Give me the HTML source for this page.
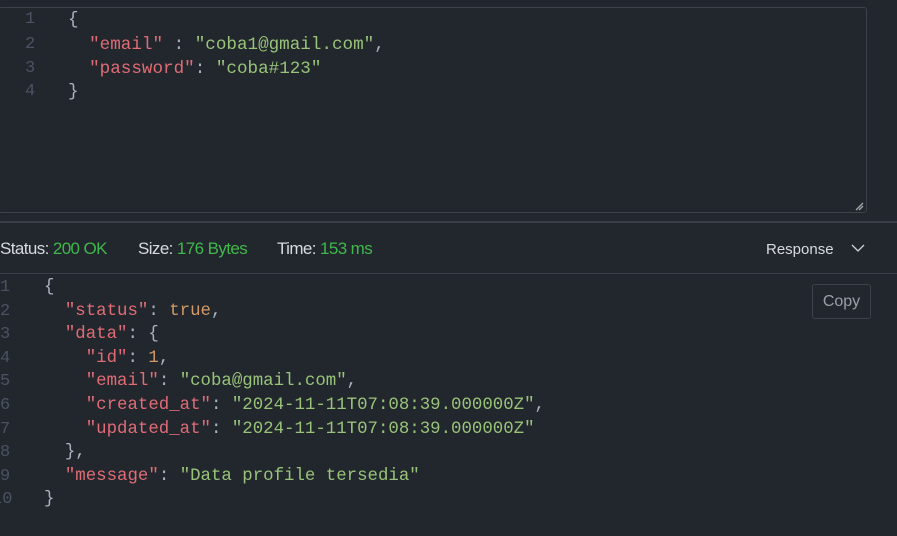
<!DOCTYPE html>
<html><head><style>
body{margin:0;width:897px;height:536px;background:#22262d;overflow:hidden;position:relative;font-family:"Liberation Mono",monospace}
.box{position:absolute;left:-2px;top:7px;width:867px;height:204px;border:1px solid #3c414a;border-radius:3px}
.sep{position:absolute;left:0;top:221px;width:897px;height:2px;background:#3a3f47}
.sep2{position:absolute;left:0;top:273px;width:897px;height:1px;background:#3a3f47}
.l{position:absolute;white-space:pre;font-size:17.6px;color:#abb2bf}
.n{position:absolute;color:#4b5263;font-size:17px;white-space:pre}
.k{color:#e06c75}.s{color:#98c379}.o{color:#d19a66}
.st{position:absolute;top:239px;font-family:"Liberation Sans",sans-serif;font-size:17px;color:#d7dae0;letter-spacing:-0.6px;white-space:nowrap}
.g{color:#3fb84a}
.copy{position:absolute;left:812px;top:284px;width:57px;height:33px;border:1px solid #3c414a;border-radius:3px;color:#9aa0a8;font-family:"Liberation Sans",sans-serif;font-size:16px;text-align:center;line-height:33px}
</style></head><body>
<div class="box"></div>
<div class="n" style="left:25px;top:10px">1</div>
<div class="n" style="left:25px;top:35px">2</div>
<div class="n" style="left:25px;top:59px">3</div>
<div class="n" style="left:25px;top:82px">4</div>
<div class="l" style="left:68px;top:10px">{</div>
<div class="l" style="left:68px;top:35px">  <span class="k">"email"</span> : <span class="s">"coba1@gmail.com"</span>,</div>
<div class="l" style="left:68px;top:59px">  <span class="k">"password"</span>: <span class="s">"coba#123"</span></div>
<div class="l" style="left:68px;top:82px">}</div>
<svg style="position:absolute;left:855px;top:202px" width="9" height="9"><path d="M1 8L8 1M4 8L8 4" stroke="#aaa" stroke-width="1.3"/></svg>
<div class="sep"></div>
<div class="st" style="left:0">Status: <span class="g">200 OK</span></div>
<div class="st" style="left:138px">Size: <span class="g">176 Bytes</span></div>
<div class="st" style="left:277px">Time: <span class="g">153 ms</span></div>
<div class="st" style="left:766px;font-size:15px;top:241px;letter-spacing:0">Response</div>
<svg style="position:absolute;left:851px;top:244px" width="14" height="9"><path d="M1 1L7 7L13 1" stroke="#cfd2d8" stroke-width="1.3" fill="none"/></svg>
<div class="sep2"></div>
<div class="copy">Copy</div>
<div style="position:absolute;left:0;top:278px">
<div class="n" style="left:0;top:0">1</div>
<div class="n" style="left:0;top:23.6px">2</div>
<div class="n" style="left:0;top:47.2px">3</div>
<div class="n" style="left:0;top:70.8px">4</div>
<div class="n" style="left:0;top:94.4px">5</div>
<div class="n" style="left:0;top:118px">6</div>
<div class="n" style="left:0;top:141.6px">7</div>
<div class="n" style="left:0;top:165.2px">8</div>
<div class="n" style="left:0;top:188.8px">9</div>
<div class="n" style="left:-8px;top:212.4px">10</div>
<div class="l" style="font-size:17.4px;left:44px;top:0">{</div>
<div class="l" style="font-size:17.4px;left:44px;top:23.6px">  <span class="k">"status"</span>: <span class="o">true</span>,</div>
<div class="l" style="font-size:17.4px;left:44px;top:47.2px">  <span class="k">"data"</span>: {</div>
<div class="l" style="font-size:17.4px;left:44px;top:70.8px">    <span class="k">"id"</span>: <span class="o">1</span>,</div>
<div class="l" style="font-size:17.4px;left:44px;top:94.4px">    <span class="k">"email"</span>: <span class="s">"coba@gmail.com"</span>,</div>
<div class="l" style="font-size:17.4px;left:44px;top:118px">    <span class="k">"created_at"</span>: <span class="s">"2024-11-11T07:08:39.000000Z"</span>,</div>
<div class="l" style="font-size:17.4px;left:44px;top:141.6px">    <span class="k">"updated_at"</span>: <span class="s">"2024-11-11T07:08:39.000000Z"</span></div>
<div class="l" style="font-size:17.4px;left:44px;top:165.2px">  },</div>
<div class="l" style="font-size:17.4px;left:44px;top:188.8px">  <span class="k">"message"</span>: <span class="s">"Data profile tersedia"</span></div>
<div class="l" style="font-size:17.4px;left:44px;top:212.4px">}</div>
</div>
</body></html>
